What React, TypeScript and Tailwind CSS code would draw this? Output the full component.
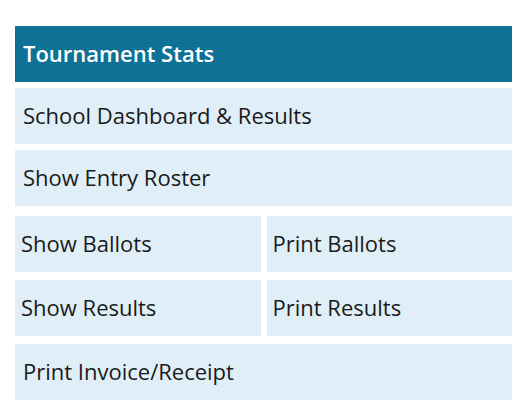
import React from 'react';

const font = { fontFamily: '"Open Sans", "Noto Sans", sans-serif' };

const Row: React.FC<{ label: string }> = ({ label }) => (
  <div className="h-[56px] flex items-center px-[8px] pb-[2px] bg-[#e0eff7] text-[22px] text-[#1a1a1a]">{label}</div>
);

const Half: React.FC<{ label: string }> = ({ label }) => (
  <div className="h-[56px] flex items-center px-[6px] pb-[2px] bg-[#e0eff7] text-[22px] text-[#1a1a1a]">{label}</div>
);

export default function App() {
  return (
    <div className="w-[528px] h-[412px] bg-white pt-[26px] px-[15px]" style={font}>
      <div className="w-[497px] flex flex-col">
        <div className="h-[56px] flex items-center px-[8px] pb-[2px] bg-[#107196] text-white text-[22px] font-semibold">
          Tournament Stats
        </div>
        <div className="mt-[6px]">
          <Row label="School Dashboard & Results" />
        </div>
        <div className="mt-[6px]">
          <Row label="Show Entry Roster" />
        </div>
        <div className="mt-[10px] grid grid-cols-2 gap-[6px]">
          <Half label="Show Ballots" />
          <Half label="Print Ballots" />
        </div>
        <div className="mt-[8px] grid grid-cols-2 gap-[6px]">
          <Half label="Show Results" />
          <Half label="Print Results" />
        </div>
        <div className="mt-[8px]">
          <Row label="Print Invoice/Receipt" />
        </div>
      </div>
    </div>
  );
}
